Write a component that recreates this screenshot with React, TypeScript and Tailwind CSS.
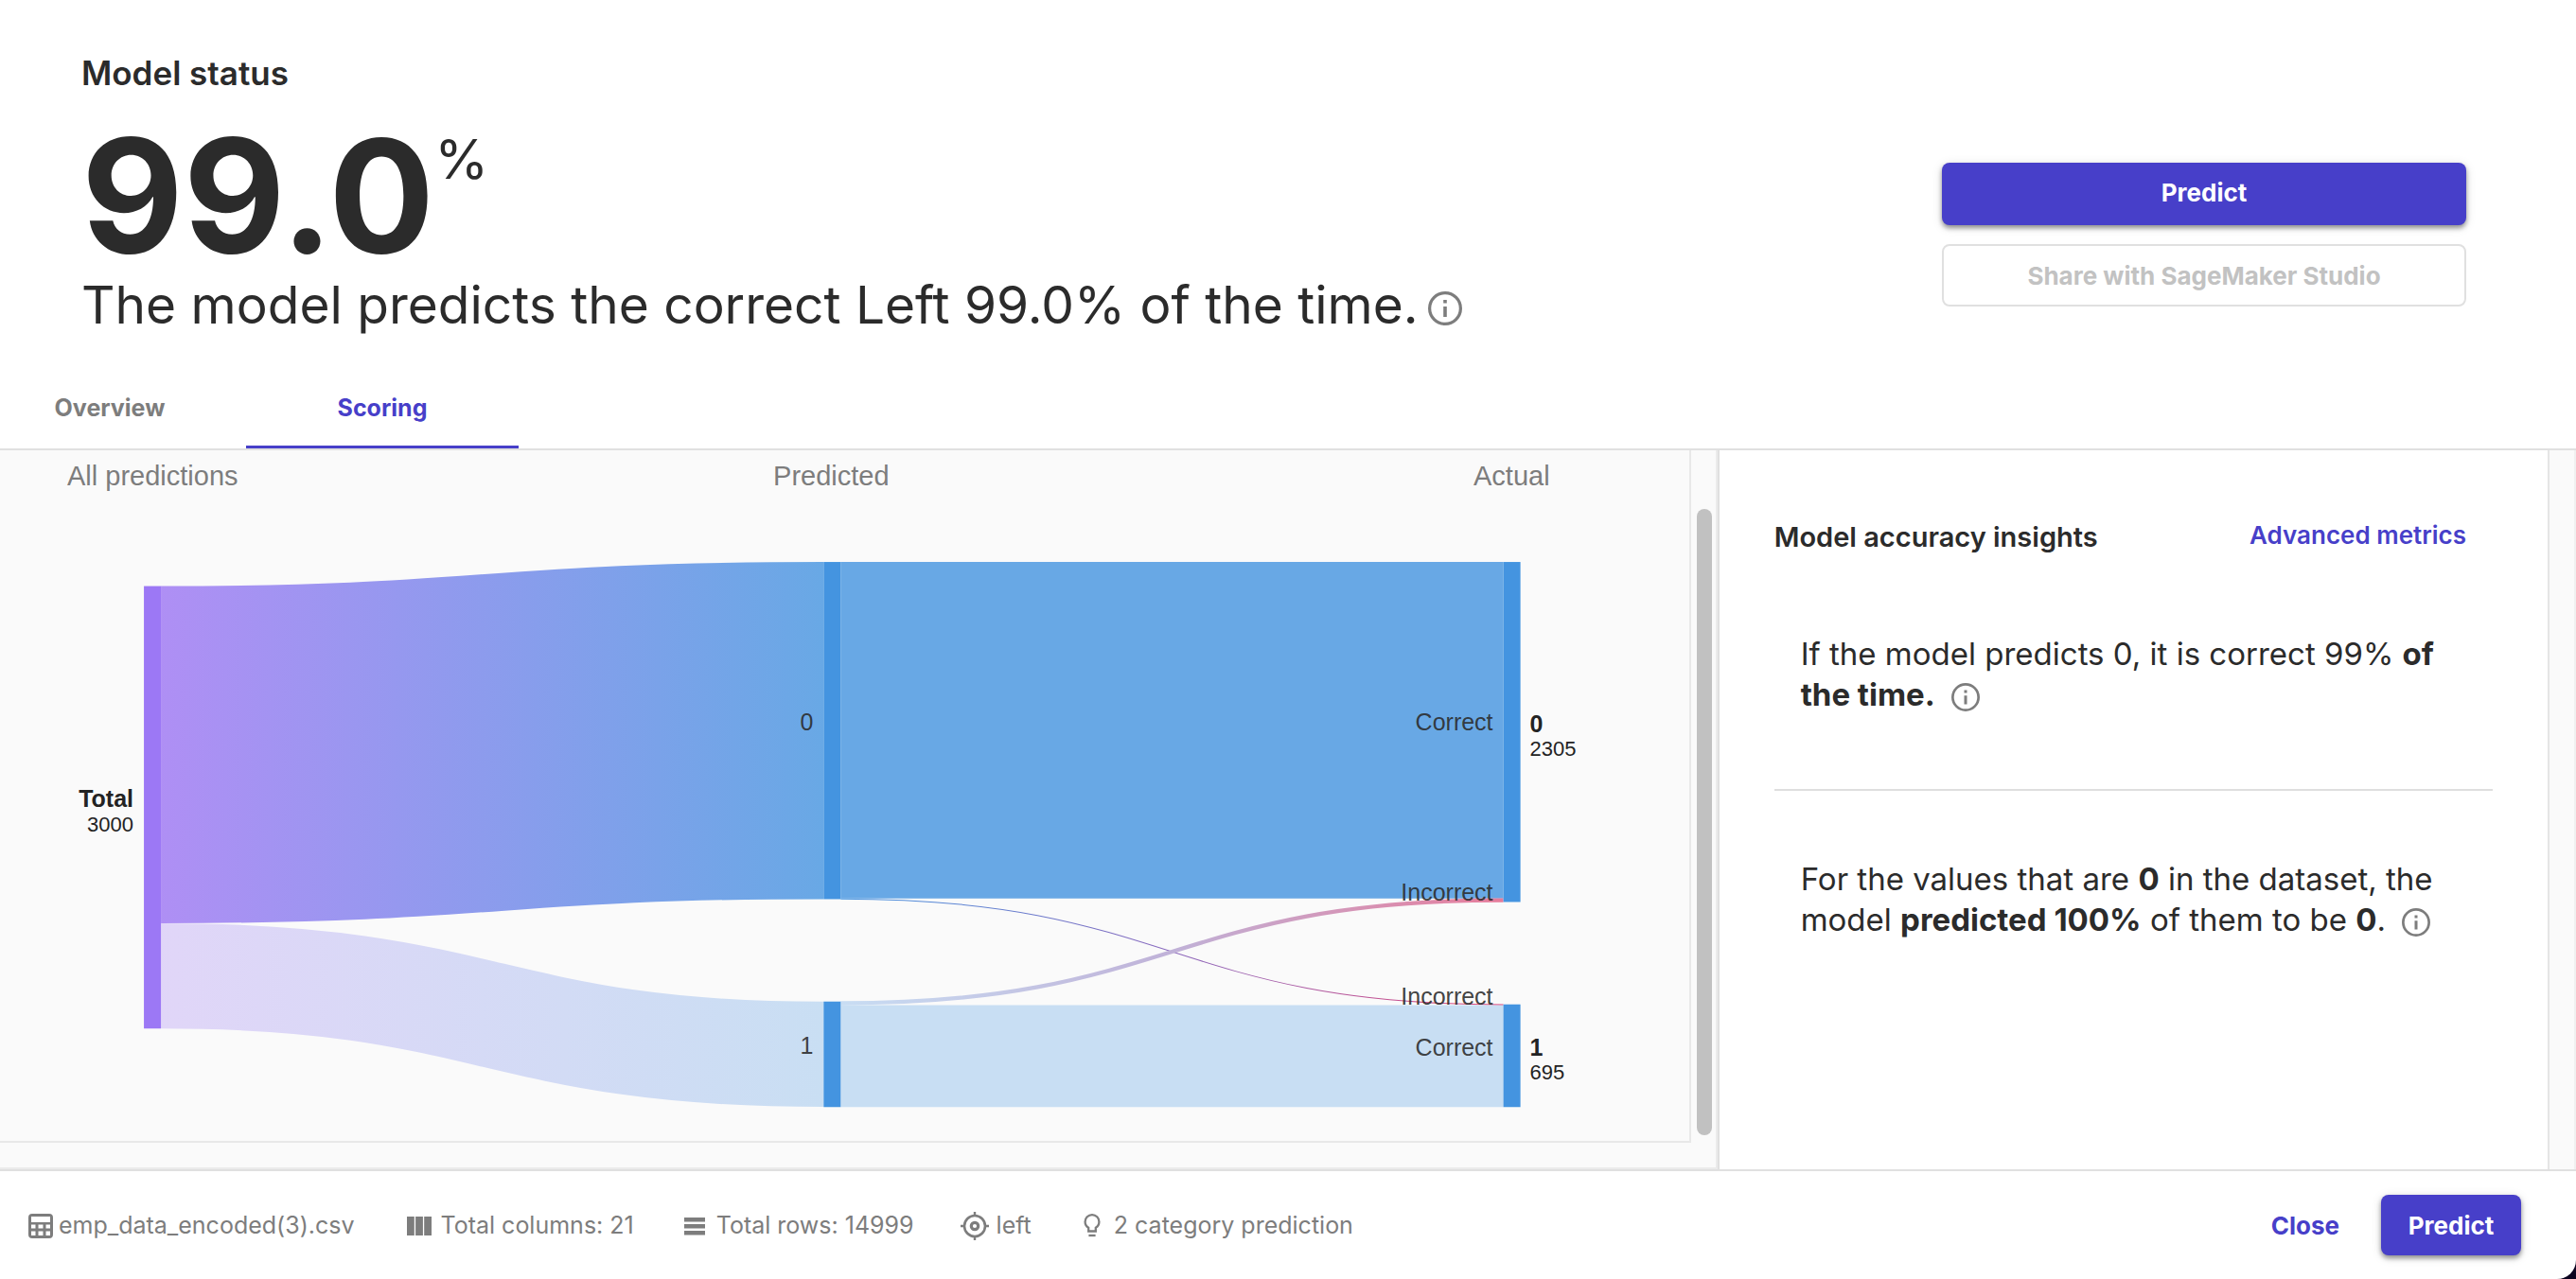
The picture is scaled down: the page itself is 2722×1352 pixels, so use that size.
import React from 'react';

function InfoIcon({ className }: { className: string }) {
  return (
    <svg viewBox="0 0 20 20" className={className} role="img" aria-label="More information">
      <circle cx="10" cy="10" r="9.1" fill="none" stroke="currentColor" strokeWidth="1.8" />
      <path d="M9 5h2v2H9zM9 8.9h2V15H9z" fill="currentColor" />
    </svg>
  );
}

function FileIcon() {
  return (
    <svg viewBox="0 0 32 32" className="size-8 shrink-0" aria-hidden="true">
      <path
        fill="currentColor"
        fillRule="evenodd"
        d="M7 3h18a4 4 0 0 1 4 4v18a4 4 0 0 1-4 4H7a4 4 0 0 1-4-4V7a4 4 0 0 1 4-4zM6 6v6h20V6zM6 14.5v4h4.5v-4zM13.5 14.5v4h5v-4zM21.5 14.5v4H26v-4zM6 21.5V26h4.5v-4.5zM13.5 21.5V26h5v-4.5zM21.5 21.5V26H26v-4.5z"
      />
    </svg>
  );
}

function ColumnsIcon() {
  return (
    <svg viewBox="0 0 32 32" className="size-8 shrink-0" aria-hidden="true">
      <path fill="currentColor" d="M3 6h7.8v20H3zM12.1 6h7.8v20h-7.8zM21.2 6H29v20h-7.8z" />
    </svg>
  );
}

function RowsIcon() {
  return (
    <svg viewBox="0 0 32 32" className="size-8 shrink-0" aria-hidden="true">
      <path fill="currentColor" d="M5 7h22v4.6H5zM5 14h22v4.6H5zM5 21h22v4.6H5z" />
    </svg>
  );
}

function TargetIcon() {
  return (
    <svg viewBox="0 0 32 32" className="size-8 shrink-0" fill="none" stroke="currentColor" aria-hidden="true">
      <circle cx="16" cy="16" r="11" strokeWidth="2.6" />
      <circle cx="16" cy="16" r="3.7" strokeWidth="3.2" />
      <path d="M16 1v4M16 27v4M1 16h4M27 16h4" strokeWidth="2.4" />
    </svg>
  );
}

function BulbIcon() {
  return (
    <svg viewBox="0 0 32 32" className="size-8 shrink-0" fill="none" stroke="currentColor" aria-hidden="true">
      <path
        strokeWidth="2.3"
        d="M12.2 21.5v-3.7c-2.3-1.4-3.6-3.6-3.6-6.3a7.4 7.4 0 0 1 14.8 0c0 2.7-1.3 4.9-3.6 6.3v3.7z"
      />
      <path strokeWidth="2.3" d="M12.4 26h7.2" />
    </svg>
  );
}

const links = [
  { d: 'M170 797.6 C520 797.6 520 772.1 870 772.1', w: 356.3, o: 0.8, g: 'url(#total)', k: 'top' },
  { d: 'M170 1031.4 C520 1031.4 520 1114.2 870 1114.2', w: 111.3, o: 0.27, g: 'url(#total)', k: 'bottom' },
  { d: 'M888 771.8 L1588 771.8', w: 355.6, o: 0.8, g: '#4494e0', k: 'zero-correct' },
  { d: 'M888 950 C1238 950 1238 1061.8 1588 1061.8', w: 1, o: 1, g: 'url(#wrong)', k: 'zero-wrong' },
  { d: 'M888 1060.2 C1238 1060.2 1238 951.4 1588 951.4', w: 4.2, o: 1, g: 'url(#wrongSoft)', k: 'one-wrong' },
  { d: 'M888 1116.2 L1588 1116.2', w: 107.7, o: 0.27, g: '#4494e0', k: 'one-correct' },
];

function Sankey() {
  return (
    <svg
      viewBox="0 476 1784 730"
      className="block h-auto w-full font-['Liberation_Sans',sans-serif]"
      role="img"
      aria-label="Flow from all predictions to predicted and actual values"
    >
      <defs>
        <linearGradient id="total" gradientUnits="userSpaceOnUse" x1="170" x2="870" y1="0" y2="0">
          <stop offset="0" stopColor="#9c74f3" />
          <stop offset="1" stopColor="#4494e0" />
        </linearGradient>
        <linearGradient id="wrong" gradientUnits="userSpaceOnUse" x1="888" x2="1588" y1="0" y2="0">
          <stop offset="0" stopColor="#4494e0" />
          <stop offset="0.5" stopColor="#8a68bd" />
          <stop offset="1" stopColor="#e0457a" />
        </linearGradient>
        <linearGradient id="wrongSoft" gradientUnits="userSpaceOnUse" x1="888" x2="1588" y1="0" y2="0">
          <stop offset="0" stopColor="#c8ddf3" />
          <stop offset="0.5" stopColor="#c0b2d8" />
          <stop offset="1" stopColor="#e67c9b" />
        </linearGradient>
      </defs>
      {links.map((l) => (
        <path key={l.k} d={l.d} fill="none" stroke={l.g} strokeWidth={l.w} strokeOpacity={l.o} />
      ))}
      <rect x="152" y="619.5" width="18" height="467.5" fill="#9c78f5" />
      <g fill="#4494e0">
        <rect x="870" y="594" width="18" height="356.3" />
        <rect x="870" y="1058.5" width="18" height="111.5" />
        <rect x="1588" y="594" width="18" height="359.3" />
        <rect x="1588" y="1061.5" width="18" height="108.5" />
      </g>
      <g className="text-[29px]" fill="#7d7d7d">
        <text x="71" y="513">All predictions</text>
        <text x="878" y="513" textAnchor="middle">Predicted</text>
        <text x="1637" y="513" textAnchor="end">Actual</text>
      </g>
      <g className="text-[25px]" fill="#2b2b2b" fillOpacity="0.9" textAnchor="end">
        <text x="859" y="772">0</text>
        <text x="859" y="1114">1</text>
        <text x="1577" y="772">Correct</text>
        <text x="1577" y="952">Incorrect</text>
        <text x="1577" y="1062">Incorrect</text>
        <text x="1577" y="1116">Correct</text>
      </g>
      <g className="text-[25px] font-bold" fill="#232323">
        <text x="141" y="853" textAnchor="end">Total</text>
        <text x="1616" y="774">0</text>
        <text x="1616" y="1116">1</text>
      </g>
      <g className="text-[22px]" fill="#232323">
        <text x="141" y="879" textAnchor="end">3000</text>
        <text x="1616" y="799">2305</text>
        <text x="1616" y="1141">695</text>
      </g>
    </svg>
  );
}

function Fact({ icon, children }: { icon: React.ReactNode; children: React.ReactNode }) {
  return (
    <li className="flex items-center gap-[7px]">
      {icon}
      <span>{children}</span>
    </li>
  );
}

export default function App() {
  return (
    <div className="min-h-screen bg-[#0c0420] font-['Inter',sans-serif] text-[#2b2b2b]">
      <div className="flex min-h-screen flex-col overflow-hidden rounded-br-[20px] bg-white">
        <header className="flex items-start justify-between pt-14 pr-[116px] pl-[86px]">
          <div>
            <h1 className="text-[35px] leading-[42px] font-semibold">Model status</h1>
            <p className="mt-[26px] flex items-start">
              <span className="text-[166px] leading-[166px] font-bold">99.0</span>
              <span className="text-[58px] leading-[88px]">%</span>
            </p>
            <p className="flex items-center gap-2.5 text-[55px] leading-16">
              The model predicts the correct Left 99.0% of the time.
              <InfoIcon className="mt-2 size-9 text-[#7d7d7d]" />
            </p>
          </div>
          <div className="mt-[116px] flex w-[554px] flex-col gap-5 text-[26px] font-bold">
            <button
              type="button"
              className="h-[66px] rounded-lg bg-[#473fc9] pb-1 text-white shadow-[0_3px_5px_rgba(0,0,0,0.4),0_2px_12px_rgba(0,0,0,0.12)]"
            >
              Predict
            </button>
            <button type="button" disabled className="h-[66px] rounded-lg border-2 border-[#e0e0e0] text-[#c2c2c2]">
              Share with SageMaker Studio
            </button>
          </div>
        </header>

        <nav className="mt-8 flex h-[90px] gap-7 border-b-2 border-[#e0e0e0] text-[25px] font-bold">
          <button type="button" className="w-[232px] pt-1 text-[#7d7d7d]">
            Overview
          </button>
          <button type="button" className="w-72 border-b-3 border-[#473fc9] pt-[7px] text-[#473fc9]">
            Scoring
          </button>
        </nav>

        <main className="flex flex-1 bg-[#fafafa]">
          <section className="flex flex-1 gap-1.5 border-r-2 border-b-2 border-[#ebebeb] pr-1">
            <div className="flex-1 self-start border-r-2 border-b-2 border-[#e8e8e8]">
              <Sankey />
            </div>
            <div className="flex w-4 flex-col pt-[62px] pb-[34px]">
              <div className="flex-1 rounded-full bg-[#c1c1c1]" />
            </div>
          </section>
          <aside className="flex w-1/3 border-l-2 border-[#e0e0e0]">
            <div className="flex-1 border-r-2 border-[#e5e5e5] bg-white px-[58px] pt-[72px]">
              <div className="flex items-start justify-between pr-7">
                <h2 className="text-[29px] leading-10 font-semibold">Model accuracy insights</h2>
                <button type="button" className="text-[26px] leading-9 font-semibold text-[#473fc9]">
                  Advanced metrics
                </button>
              </div>
              <p className="mt-[82px] px-7 text-[33px] leading-[43px]">
                If the model predicts 0, it is correct 99% <b>of the time.</b>{' '}
                <InfoIcon className="ml-2 inline size-[30px] text-[#7d7d7d]" />
              </p>
              <hr className="mt-[78px] mb-[72px] border-t-2 border-[#dedede]" />
              <p className="px-7 text-[33px] leading-[43px]">
                For the values that are <b>0</b> in the dataset, the model <b>predicted 100%</b> of them to be{' '}
                <b>0</b>. <InfoIcon className="ml-2 inline size-[30px] text-[#7d7d7d]" />
              </p>
            </div>
            <div className="w-7 border-r-2 border-[#f0f0f0]" />
          </aside>
        </main>

        <footer className="flex h-[116px] items-center justify-between border-t-2 border-[#e0e0e0] pr-[58px] pl-[27px]">
          <ul className="flex gap-12 pt-0.5 text-[25px] text-[#7d7d7d]">
            <li className="mr-1 flex items-center gap-[3px]">
              <FileIcon />
              <span>emp_data_encoded(3).csv</span>
            </li>
            <Fact icon={<ColumnsIcon />}>Total columns: 21</Fact>
            <Fact icon={<RowsIcon />}>Total rows: 14999</Fact>
            <Fact icon={<TargetIcon />}>left</Fact>
            <Fact icon={<BulbIcon />}>2 category prediction</Fact>
          </ul>
          <div className="flex items-center gap-11 text-[26px] font-bold">
            <button type="button" className="text-[#473fc9]">
              Close
            </button>
            <button
              type="button"
              className="h-16 w-37 rounded-lg bg-[#473fc9] text-white shadow-[0_3px_5px_rgba(0,0,0,0.4),0_2px_12px_rgba(0,0,0,0.12)]"
            >
              Predict
            </button>
          </div>
        </footer>
      </div>
    </div>
  );
}
